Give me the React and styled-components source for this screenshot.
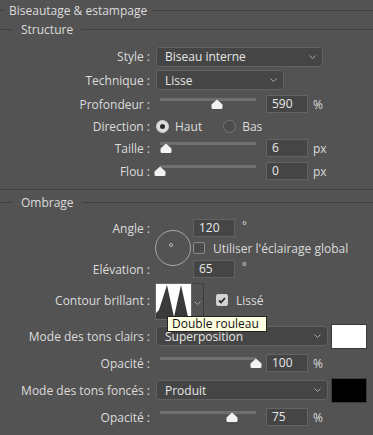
import styled, { createGlobalStyle } from 'styled-components'

const GlobalStyle = createGlobalStyle`
  body {
    margin: 0;
    background: #535353;
  }
`

const Panel = styled.div`
  width: 373px;
  height: 435px;
  overflow: hidden;
  background: #535353;
  color: #dcdcdc;
  font-family: "Open Sans", "Liberation Sans", sans-serif;
  font-size: 12px;
  position: relative;
`

const GroupTitle = styled.div`
  display: flex;
  align-items: center;
  height: ${p => p.$h}px;

  &::before {
    content: '';
    width: ${p => p.$lead}px;
    height: 1px;
    background: #404040;
    margin-right: ${p => p.$gap}px;
  }
  &::after {
    content: '';
    flex: 1;
    height: 1px;
    background: #404040;
    margin-left: ${p => p.$gap}px;
  }
`

const Divider = styled.div`
  height: 7px;
  border-bottom: 1px solid #404040;
`

const Spacer = styled.div`
  height: ${p => p.$h}px;
`

const Row = styled.div`
  display: flex;
  align-items: center;
  height: ${p => p.$h}px;
  position: relative;
`

const Label = styled.div`
  width: 150px;
  flex-shrink: 0;
  text-align: right;
  white-space: nowrap;
  margin-right: ${p => p.$mr ?? 6}px;
`

const SelectBox = styled.div`
  width: ${p => p.$w}px;
  height: 20px;
  box-sizing: border-box;
  border: 1px solid #626262;
  border-radius: 3px;
  background: #454545;
  color: #e6e6e6;
  display: flex;
  align-items: center;
  justify-content: space-between;
  padding: 0 6px 0 8px;
`

const Chevron = () => (
  <svg width="7" height="4" viewBox="0 0 7 4">
    <path d="M0.5 0.5 L3.5 3.5 L6.5 0.5" fill="none" stroke="#a8a8a8" strokeWidth="1" />
  </svg>
)

function Select({ value, width }) {
  return (
    <SelectBox $w={width}>
      <span>{value}</span>
      <Chevron />
    </SelectBox>
  )
}

const SliderWrap = styled.div`
  width: 96px;
  height: 12px;
  margin-left: 4px;
  position: relative;
`

const Track = styled.div`
  height: 3px;
  background: #6f6f6f;
`

const Thumb = styled.svg`
  position: absolute;
  top: 1px;
  margin-left: -6px;
`

function Slider({ pct }) {
  return (
    <SliderWrap>
      <Track />
      <Thumb width="12" height="10" viewBox="0 0 12 10" style={{ left: `${pct}%` }}>
        <path d="M6 0.5 L11.5 5.5 L11.5 8.5 Q11.5 10 10 10 L2 10 Q0.5 10 0.5 8.5 L0.5 5.5 Z" fill="#f2f2f2" />
      </Thumb>
    </SliderWrap>
  )
}

const NumInput = styled.div`
  width: 42px;
  height: 18px;
  box-sizing: border-box;
  border: 1px solid #636363;
  background: #454545;
  color: #e8e8e8;
  padding-left: 5px;
  line-height: 16px;
  margin-left: ${p => p.$ml ?? 0}px;
`

const Unit = styled.span`
  margin-left: 5px;
`

const Degree = styled.span`
  margin-left: 7px;
  align-self: flex-start;
  padding-top: 2px;
  font-size: 11px;
  line-height: 12px;
`

const RadioDot = styled.span`
  width: 13px;
  height: 13px;
  box-sizing: border-box;
  border-radius: 50%;
  border: 1px solid ${p => (p.$on ? '#d0d0d0' : '#767676')};
  background: ${p => (p.$on ? '#dcdcdc' : '#4c4c4c')};
  display: flex;
  align-items: center;
  justify-content: center;
  margin-right: 6px;

  &::after {
    content: '';
    display: ${p => (p.$on ? 'block' : 'none')};
    width: 5px;
    height: 5px;
    border-radius: 50%;
    background: #2a2a2a;
  }
`

const RadioOption = styled.div`
  display: flex;
  align-items: center;
  margin-right: ${p => p.$mr ?? 0}px;
`

const CheckBox = styled.span`
  width: 12px;
  height: 12px;
  box-sizing: border-box;
  border-radius: 2px;
  border: 1px solid ${p => (p.$on ? '#cfcfcf' : '#8a8a8a')};
  background: ${p => (p.$on ? '#d4d4d4' : '#4b4b4b')};
  display: flex;
  align-items: center;
  justify-content: center;
  margin-right: 8px;
  flex-shrink: 0;
`

const CheckOption = styled.div`
  display: flex;
  align-items: center;
  margin-left: ${p => p.$ml ?? 0}px;
`

const AngleGrid = styled.div`
  display: grid;
  grid-template-columns: 150px 36px auto;
  grid-template-rows: 21px 20px 22px;
  margin-top: 2px;
`

const GridLabel = styled(Label)`
  grid-column: 1;
  grid-row: ${p => p.$row};
  align-self: center;
  margin-right: 0;
  padding-top: ${p => p.$pt ?? 0}px;
`

const AngleDial = styled.svg`
  grid-column: 2;
  grid-row: 1 / 4;
  align-self: center;
  margin-left: 5px;
`

const GridCell = styled.div`
  grid-column: 3;
  grid-row: ${p => p.$row};
  display: flex;
  align-items: center;
  padding-left: 7px;
`

const ContourPick = styled.div`
  display: flex;
  height: 35px;
  margin-left: -1px;
`

const ContourThumb = styled.svg`
  display: block;
  border: 1px solid #6a6a6a;
`

const ContourArrow = styled.div`
  width: 11px;
  border: 1px solid #3e3e3e;
  border-left: none;
  display: flex;
  align-items: center;
  justify-content: center;
  padding-top: 6px;
`

const Tooltip = styled.div`
  position: absolute;
  left: 167px;
  top: 36px;
  height: 16px;
  box-sizing: border-box;
  padding: 0 4px;
  width: 100px;
  background: #ffffe1;
  border: 1px solid #222;
  color: #111;
  line-height: 14px;
  white-space: nowrap;
  z-index: 2;
`

const Swatch = styled.div`
  width: 36px;
  height: 25px;
  box-sizing: border-box;
  margin-left: 3px;
  border: 1px solid ${p => p.$border};
  background: ${p => p.$color};
`

function SliderRow({ label, pct, value, unit, h = 22 }) {
  return (
    <Row $h={h}>
      <Label>{label}</Label>
      <Slider pct={pct} />
      <NumInput $ml={10}>{value}</NumInput>
      <Unit>{unit}</Unit>
    </Row>
  )
}

export default function App() {
  return (
    <Panel>
      <GlobalStyle />
      <GroupTitle $h={21} $lead={4} $gap={5}>Biseautage &amp; estampage</GroupTitle>
      <GroupTitle $h={17} $lead={13} $gap={8}>Structure</GroupTitle>

      <Spacer $h={7} />
      <Row $h={23}>
        <Label>Style :</Label>
        <Select value="Biseau interne" width={167} />
      </Row>
      <Row $h={24}>
        <Label>Technique :</Label>
        <Select value="Lisse" width={128} />
      </Row>
      <SliderRow label="Profondeur :" pct={59} value="590" unit="%" h={24} />
      <Row $h={20}>
        <Label>Direction :</Label>
        <RadioOption $mr={21}>
          <RadioDot $on />
          Haut
        </RadioOption>
        <RadioOption>
          <RadioDot />
          Bas
        </RadioOption>
      </Row>
      <SliderRow label="Taille :" pct={6} value="6" unit="px" h={24} />
      <SliderRow label="Flou :" pct={0} value="0" unit="px" />
      <Divider />

      <GroupTitle $h={25} $lead={13} $gap={8}>Ombrage</GroupTitle>

      <AngleGrid>
        <GridLabel $row={1} $pt={2}>Angle :</GridLabel>
        <GridLabel $row={3}>Elévation :</GridLabel>
        <AngleDial width="38" height="37" viewBox="0 0 38 37">
          <circle cx="18" cy="18" r="17.5" fill="none" stroke="#a9a9a9" strokeWidth="1" />
          <circle cx="16" cy="15" r="1.5" fill="none" stroke="#b5b5b5" strokeWidth="1" />
        </AngleDial>
        <GridCell $row={1}>
          <NumInput>120</NumInput>
          <Degree>°</Degree>
        </GridCell>
        <GridCell $row={2}>
          <CheckOption>
            <CheckBox />
            Utiliser l'éclairage global
          </CheckOption>
        </GridCell>
        <GridCell $row={3}>
          <NumInput>65</NumInput>
          <Degree>°</Degree>
        </GridCell>
      </AngleGrid>

      <Row $h={40}>
        <Label>Contour brillant :</Label>
        <ContourPick>
          <ContourThumb width="35" height="35" viewBox="0 0 35 35">
            <rect width="35" height="35" fill="#ffffff" />
            <path d="M0 35 L0 29 L3 26 L11 1 L18 33 L25 1 L32 33 L33 35 Z" fill="#3a3a3a" />
          </ContourThumb>
          <ContourArrow>
            <Chevron />
          </ContourArrow>
        </ContourPick>
        <CheckOption $ml={12}>
          <CheckBox $on>
            <svg width="8" height="7" viewBox="0 0 8 7">
              <path d="M1 3.5 L3 5.5 L7 1" fill="none" stroke="#2b2b2b" strokeWidth="1.8" />
            </svg>
          </CheckBox>
          Lissé
        </CheckOption>
        <Tooltip>Double rouleau</Tooltip>
      </Row>

      <Row $h={32}>
        <Label>Mode des tons clairs :</Label>
        <Select value="Superposition" width={172} />
        <Swatch $color="#ffffff" $border="#3a3a3a" />
      </Row>
      <SliderRow label="Opacité :" pct={100} value="100" unit="%" />
      <Row $h={32}>
        <Label>Mode des tons foncés :</Label>
        <Select value="Produit" width={172} />
        <Swatch $color="#000000" $border="#3c3c3c" />
      </Row>
      <SliderRow label="Opacité :" pct={75} value="75" unit="%" />
    </Panel>
  )
}
